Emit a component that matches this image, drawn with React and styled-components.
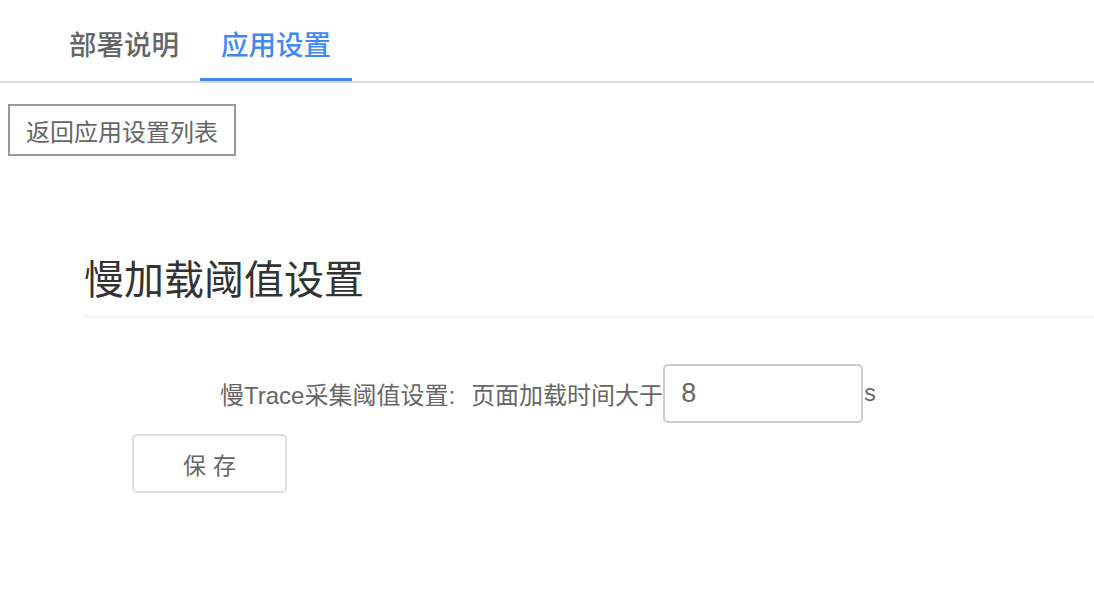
import React, { useState } from 'react';
import styled, { createGlobalStyle } from 'styled-components';

const GlobalStyle = createGlobalStyle`
  body {
    margin: 0;
    background: #fff;
    font-family: "Liberation Sans", "Noto Sans CJK SC", sans-serif;
  }
`;

const Page = styled.div`
  width: 100%;
  min-height: 604px;
  display: flex;
  flex-direction: column;
`;

const TabBar = styled.nav`
  display: flex;
  padding-left: 48px;
  border-bottom: 2px solid #dcdcdc;
`;

const Tab = styled.div`
  box-sizing: border-box;
  height: 81px;
  padding: 8px 21px 0;
  display: flex;
  align-items: center;
  font-size: 27.5px;
  font-weight: 500;
  color: ${p => (p.active ? '#4189f2' : '#666')};
  border-bottom: 3px solid ${p => (p.active ? '#4189f2' : 'transparent')};
  cursor: pointer;
`;

const BackButton = styled.button`
  align-self: flex-start;
  box-sizing: border-box;
  margin: 21px 0 0 8px;
  width: 228px;
  height: 52px;
  border: 2px solid #999;
  border-radius: 0;
  background: #fff;
  color: #666;
  font-family: inherit;
  font-size: 24px;
  padding: 0;
`;

const Section = styled.section`
  margin: 100px 0 0 84px;
`;

const SectionTitle = styled.h2`
  margin: 0;
  padding-bottom: 12px;
  border-bottom: 1px solid #ececec;
  font-size: 40px;
  line-height: 48px;
  font-weight: 400;
  color: #333;
`;

const FormRow = styled.div`
  display: flex;
  align-items: center;
  margin-top: 47px;
  padding-left: 136px;
  font-size: 24px;
  color: #666;
`;

const Label = styled.span`
  margin-right: 16px;
`;

const Input = styled.input`
  box-sizing: border-box;
  width: 200px;
  height: 59px;
  border: 2px solid #ccc;
  border-radius: 5px;
  padding: 0 16px;
  font-family: inherit;
  font-size: 27px;
  color: #666;
  outline: none;
`;

const Unit = styled.span`
  margin-left: 1px;
  font-size: 23px;
`;

const SaveButton = styled.button`
  box-sizing: border-box;
  margin: 11px 0 0 48px;
  width: 155px;
  height: 59px;
  border: 2px solid #ddd;
  border-radius: 5px;
  background: #fff;
  color: #666;
  font-family: inherit;
  font-size: 23px;
  letter-spacing: 7px;
  padding: 0 0 0 7px;
`;

export default function App() {
  const [tab, setTab] = useState(1);
  const [value, setValue] = useState('8');
  return (
    <Page>
      <GlobalStyle />
      <TabBar>
        <Tab active={tab === 0} onClick={() => setTab(0)}>部署说明</Tab>
        <Tab active={tab === 1} onClick={() => setTab(1)}>应用设置</Tab>
      </TabBar>
      <BackButton>返回应用设置列表</BackButton>
      <Section>
        <SectionTitle>慢加载阈值设置</SectionTitle>
        <FormRow>
          <Label>慢Trace采集阈值设置:</Label>
          <span>页面加载时间大于</span>
          <Input value={value} onChange={e => setValue(e.target.value)} />
          <Unit>s</Unit>
        </FormRow>
        <SaveButton>保存</SaveButton>
      </Section>
    </Page>
  );
}
